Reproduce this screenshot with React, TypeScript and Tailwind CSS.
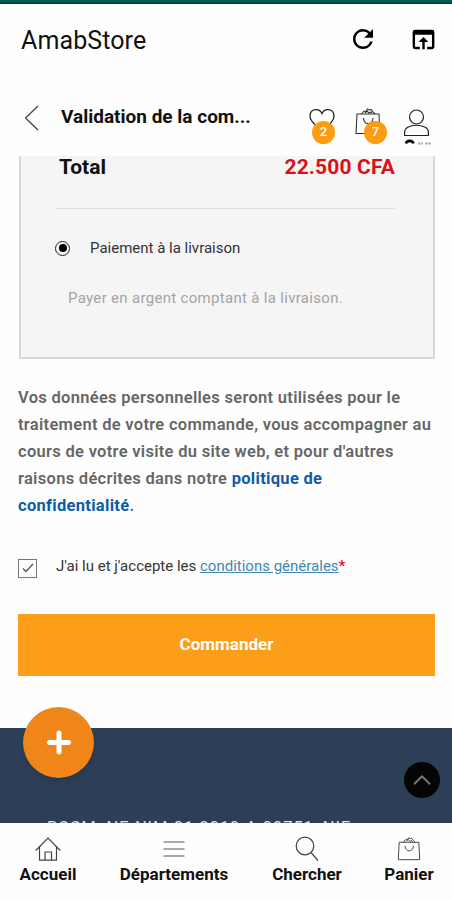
import { useState, type ReactNode } from 'react';
import { ChevronUp } from 'lucide-react';
import { MdOpenInBrowser, MdRefresh } from 'react-icons/md';

function BagIcon({ className }: { className?: string }) {
  return (
    <svg viewBox="0 0 26 28" className={className} fill="none" stroke="currentColor" strokeWidth="1.1">
      <path d="M2 7h22l1 19.500H1z" />
      <path d="M6.500 7l2.500-3 2 .5L12.500 2l2 1 1.500-.5L18 5l2 2M10 6l2-2 2 2 2-1 1 1.500" />
      <path d="M8.500 11c.5 7.500 9 7.500 9.500 0" />
    </svg>
  );
}

function HeartIcon() {
  return (
    <svg viewBox="0 0 26 24" className="w-[26px] h-6" fill="none" stroke="#222" strokeWidth="1.300">
      <path d="M13 5.500C10.500-.3 1.500.3 1 7.500c-.3 6 6.200 10 12 15 5.800-5 12.300-9 12-15C24.500.3 15.500-.3 13 5.500z" />
    </svg>
  );
}

function UserIcon() {
  return (
    <svg viewBox="0 0 28 36" className="w-7 h-9" fill="none" stroke="#222" strokeWidth="1.200">
      <circle cx="13.500" cy="8" r="7" />
      <path d="M1.600 26.500v-3.500c0-9 23.800-9 23.800 0v3.500z" />
      <path d="M3 34.500c.8-3.500 6.500-3.500 7.500 0" stroke="#000" strokeWidth="2.600" />
      <path d="M15 34.500h5M22 34.500h7" stroke="#aaa" strokeWidth="2" strokeDasharray="2.500 .8" />
    </svg>
  );
}

function HomeIcon() {
  return (
    <svg viewBox="0 0 26 24" className="w-[26px] h-6" fill="none" stroke="#444" strokeWidth="1.200">
      <path d="M.8 13.500L13 1.200l12.200 12.300M4.500 10v13.200h17V10M10 23V15h6.500v8" />
    </svg>
  );
}

function MenuIcon() {
  return (
    <svg viewBox="0 0 22 18" className="w-[22px] h-[18px]" stroke="#555" strokeWidth="1.200">
      <path d="M.5 2h21M.5 9h21M.5 16h21" />
    </svg>
  );
}

function SearchIcon() {
  return (
    <svg viewBox="0 0 24 26" className="w-6 h-[26px]" fill="none" stroke="#444" strokeWidth="1.200">
      <circle cx="10" cy="10" r="8.800" />
      <path d="M16 16.500l7 8" />
    </svg>
  );
}

function Badge({ className, children }: { className: string; children: ReactNode }) {
  return (
    <span className={`absolute w-[23px] h-[23px] pb-0.5 rounded-full bg-[#fb9c12] text-white text-[13px] font-medium flex items-center justify-center ${className}`}>
      {children}
    </span>
  );
}

function NavItem({ icon, label, className }: { icon: ReactNode; label: string; className: string }) {
  return (
    <button className={`flex flex-col items-center ${className}`}>
      <span className="h-[27px] flex items-center">{icon}</span>
      <span className="mt-0.5 text-[17px] leading-5 font-bold text-[#111] whitespace-nowrap">{label}</span>
    </button>
  );
}

export default function App() {
  const [accepted, setAccepted] = useState(true);

  return (
    <div className="w-[452px] h-[900px] bg-[#fefefe] overflow-hidden flex flex-col font-[Roboto,sans-serif] text-[#111]">
      <div className="h-1 shrink-0 bg-[#00594a] border-b border-[#003a28]" />

      <header className="h-[74px] shrink-0 flex items-center pl-[21px] pr-[14px]">
        <h1 className="flex-1 text-[25px] leading-8 tracking-[0.100px] text-[#111]">AmabStore</h1>
        <MdRefresh className="w-[30px] h-[30px] mb-1 mr-[31px] text-black" />
        <MdOpenInBrowser className="w-[29px] h-[29px] mb-1 text-black" />
      </header>

      <div className="h-[78px] shrink-0 flex pl-6">
        <svg viewBox="0 0 15 26" className="w-[15px] h-[26px] mt-[27px]" fill="none" stroke="#444" strokeWidth="1.300">
          <path d="M14 1L1.500 13 14 25" />
        </svg>
        <h2 className="ml-[22px] mt-[27px] w-[210px] text-[19px] leading-6 font-bold whitespace-nowrap">Validation de la com...</h2>
        <div className="relative mt-[30px] ml-[38px] w-[26px]">
          <HeartIcon />
          <Badge className="left-[3px] top-[13px]">2</Badge>
        </div>
        <div className="relative mt-[29px] ml-5 w-[26px]">
          <BagIcon className="w-[26px] h-7 text-[#333]" />
          <Badge className="left-[9px] top-[14px]">7</Badge>
        </div>
        <div className="mt-[31px] ml-[22px]"><UserIcon /></div>
      </div>

      <section className="h-[203px] shrink-0 ml-[19px] mr-[17px] bg-[#f5f5f5] border-x-2 border-b-2 border-[#d8d8d8] pl-[34px] pr-[38px]">
        <div className="h-[53px] border-b border-[#dedede] pl-1 flex justify-between text-[21px] leading-[22px] font-bold">
          <span>Total</span>
          <span className="tracking-[0.150px] text-[#db1017]">22.500 CFA</span>
        </div>
        <label className="flex items-center mt-[28px] h-[22px]">
          <span className="w-[15px] h-[15px] rounded-full border border-[#222] flex items-center justify-center">
            <span className="w-2 h-2 rounded-full bg-black" />
          </span>
          <span className="ml-5 text-[15px] text-[#333]">Paiement à la livraison</span>
        </label>
        <p className="mt-[29px] ml-[13px] text-[15px] leading-5 tracking-[0.310px] text-[#a4a4a4] whitespace-nowrap">
          Payer en argent comptant à la livraison.
        </p>
      </section>

      <p className="mt-[25px] ml-[18px] text-[16.500px] leading-[27px] font-semibold tracking-[0.300px] text-[#666] whitespace-nowrap">
        Vos données personnelles seront utilisées pour le<br />
        traitement de votre commande, vous accompagner au<br />
        cours de votre visite du site web, et pour d'autres<br />
        raisons décrites dans notre <a className="font-bold text-[#0d5ca8]">politique de<br />confidentialité</a>.
      </p>

      <div className="mt-[34px] h-[26px] shrink-0 ml-[18px] flex items-center">
        <button
          onClick={() => setAccepted(!accepted)}
          className="w-[19px] h-[19px] mt-1 border border-[#777] flex items-center justify-center"
        >
          {accepted && (
            <svg viewBox="0 0 12 10" className="w-3 h-2.5" fill="none" stroke="#555" strokeWidth="1.300">
              <path d="M1 5.500L4 8.500 11 1" />
            </svg>
          )}
        </button>
        <p className="ml-[19px] text-[15px] leading-5 text-[#333] whitespace-nowrap">
          J'ai lu et j'accepte les <a className="text-[#4087b2] underline">conditions générales</a>
          <span className="text-[#dd1734] font-bold">*</span>
        </p>
      </div>

      <button className="mt-[35px] h-[62px] shrink-0 ml-[18px] mr-[17px] pb-px bg-[#fc9e17] text-white text-[17px] font-bold">
        Commander
      </button>

      <footer className="relative mt-[52px] h-[95px] shrink-0 bg-[#2d3f56]">
        <div className="h-full overflow-hidden pt-[90px] pl-[47px]">
          <p className="text-[16.500px] leading-5 tracking-[0.900px] text-[#dce3ea] whitespace-nowrap">RCCM: NE-NIM-01-2019-A-00751, NIF</p>
        </div>
        <button className="absolute left-[23px] -top-[21px] w-[71px] h-[71px] rounded-full bg-[#f08519] shadow-md flex items-center justify-center">
          <svg viewBox="0 0 26 26" className="w-[26px] h-[26px]" stroke="white" strokeWidth="5" strokeLinecap="round">
            <path d="M13 3v19M3.500 12.500h19" />
          </svg>
        </button>
        <button className="absolute left-[404px] top-[34px] w-9 h-9 rounded-full bg-[#050505] flex items-center justify-center">
          <ChevronUp className="w-[30px] h-[30px] text-[#777]" strokeWidth={1.5} />
        </button>
      </footer>

      <nav className="h-[77px] shrink-0 pt-3 flex bg-[#fefefe]">
        <NavItem className="ml-[10px] w-[76px]" icon={<HomeIcon />} label="Accueil" />
        <NavItem className="ml-[28px] w-[120px]" icon={<MenuIcon />} label="Départements" />
        <NavItem className="ml-[33px] w-[80px]" icon={<SearchIcon />} label="Chercher" />
        <NavItem className="ml-[27px] w-[70px]" icon={<BagIcon className="w-6 h-[25px] text-[#444]" />} label="Panier" />
      </nav>
    </div>
  );
}
